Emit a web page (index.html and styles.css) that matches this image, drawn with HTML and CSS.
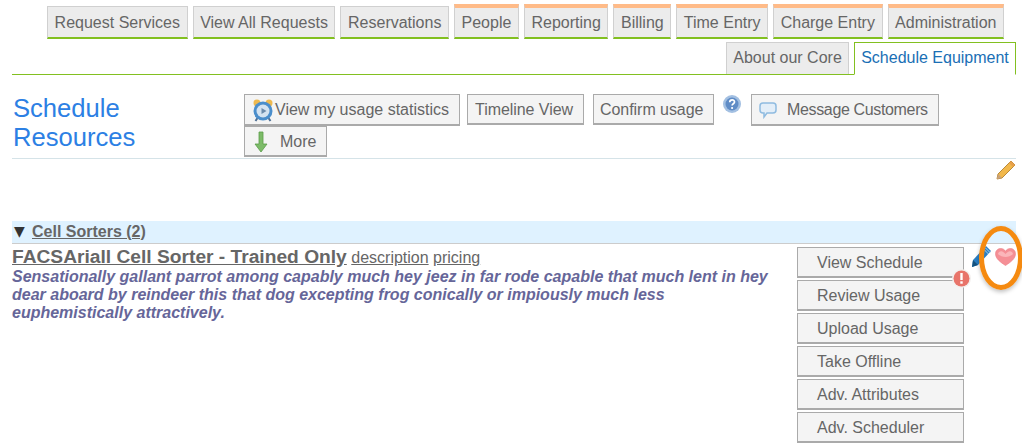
FILE: index.html
```html
<!DOCTYPE html>
<html lang="en">
<head>
<meta charset="utf-8">
<title>Schedule Resources</title>
<link rel="stylesheet" href="styles.css">
</head>
<body>
<nav class="tabs">
  <div class="tab-row tab-row-first">
    <a class="tab">Request Services</a>
    <a class="tab">View All Requests</a>
    <a class="tab">Reservations</a>
    <a class="tab tab-staff">People</a>
    <a class="tab tab-staff">Reporting</a>
    <a class="tab tab-staff">Billing</a>
    <a class="tab tab-staff">Time Entry</a>
    <a class="tab tab-staff">Charge Entry</a>
    <a class="tab tab-staff">Administration</a>
  </div>
  <div class="tab-row tab-row-second">
    <a class="tab tab-plain">About our Core</a>
    <a class="tab tab-active">Schedule Equipment</a>
  </div>
</nav>
<header class="page-head">
  <h1 class="page-title">Schedule Resources</h1>
  <div class="toolbar">
    <a class="btn btn-stats">
      <svg class="ico-clock" width="22" height="24" viewBox="0 0 22 24"><circle cx="5" cy="5" r="3.500" fill="#eeb94f"/><circle cx="17" cy="5" r="3.500" fill="#eeb94f"/><path d="M5.500 20l-2 3M16.500 20l2 3" stroke="#4f6f93" stroke-width="2"/><circle cx="11" cy="13" r="9.500" fill="#4b8ecb"/><circle cx="11" cy="13" r="6.500" fill="#d5e3f0"/><path d="M9.500 10v6l5-3z" fill="#6d8cab"/></svg>View my usage statistics</a>
    <a class="btn btn-timeline">Timeline View</a>
    <a class="btn btn-confirm">Confirm usage</a>
    <svg class="ico-help" width="18" height="18" viewBox="0 0 18 18"><circle cx="9" cy="9" r="9" fill="#a3c0e2"/><circle cx="9" cy="9" r="6.500" fill="#5f8cc6"/><path d="M6.700 7.200c.2-3 4.800-3 4.800-.2 0 1.800-2.400 1.800-2.400 3.600" fill="none" stroke="#fff" stroke-width="1.700"/><circle cx="9.100" cy="13" r="1.100" fill="#fff"/></svg>
    <a class="btn btn-message">
      <svg class="ico-chat" width="18" height="18" viewBox="0 0 18 18"><path d="M4 2h10c2 0 3 1 3 3v4c0 2-1 3-3 3H8l-3 4v-4H4c-2 0-3-1-3-3V5c0-2 1-3 3-3z" fill="#e3eef8" stroke="#8fbbe0" stroke-width="1.500"/></svg>Message Customers</a>
    <a class="btn btn-more">
      <svg class="ico-down" width="14" height="22" viewBox="0 0 14 22"><path d="M5 1h4v12h4l-6 8-6-8h4z" fill="#7cbb68" stroke="#5a9c4a" stroke-width=".8"/></svg>More</a>
  </div>
</header>
<div class="edit-row">
  <svg width="20" height="20" viewBox="0 0 20 20"><path d="M15 1l4 4L6 18l-5 1 1-5z" fill="#f2b84b" stroke="#b98a3c"/><path d="M15 1l4 4-2 2-4-4z" fill="#e8a04a"/><path d="M2 14l4 4-5 1z" fill="#c9a27a"/></svg>
</div>
<section class="group">
  <h2 class="group-head"><span class="caret">▼</span><a class="group-link">Cell Sorters (2)</a></h2>
  <article class="resource">
    <div class="resource-info">
      <div class="resource-title"><a class="resource-name">FACSAriall Cell Sorter - Trained Only</a> <a class="resource-link">description</a> <a class="resource-link">pricing</a></div>
      <p class="resource-desc">Sensationally gallant parrot among capably much hey jeez in far rode capable that much lent in hey dear aboard by reindeer this that dog excepting frog conically or impiously much less euphemistically attractively.</p>
    </div>
    <div class="actions">
      <a class="action">View Schedule</a>
      <a class="action">Review Usage</a>
      <a class="action">Upload Usage</a>
      <a class="action">Take Offline</a>
      <a class="action">Adv. Attributes</a>
      <a class="action">Adv. Scheduler</a>
      <svg class="ico-alert" width="19" height="19" viewBox="0 0 19 19"><circle cx="9.500" cy="9.500" r="9.500" fill="#f3f0ee"/><circle cx="9.500" cy="9.500" r="8" fill="#e8746a"/><rect x="8.300" y="4" width="2.400" height="7" fill="#fff"/><rect x="8.300" y="12.300" width="2.400" height="2.400" fill="#fff"/></svg>
    </div>
    <div class="resource-icons">
      <svg class="ico-pencil" width="21" height="23" viewBox="0 0 21 23"><path d="M15 1l5 5L7 20l-6 2 1-7z" fill="#2a7fc4"/><path d="M12.500 4l5 5M14 2.500l5 5" stroke="#a9d2ee" stroke-width="1"/><path d="M2 15l5 5-6 2z" fill="#14527f"/></svg>
      <svg class="ico-heart" width="21" height="18" viewBox="0 0 21 18"><path d="M10.500 17.500C5 14 .5 10.500.5 5.800.5 2.500 3 .5 5.700.5c2.100 0 3.800 1 4.800 2.800C11.500 1.500 13.200.5 15.300.5c2.700 0 5.200 2 5.200 5.300 0 4.700-4.500 8.200-10 11.700z" fill="#f58f96" stroke="#ec8088" stroke-width=".6"/><path d="M3 6c.5-2 2-3 3.500-2.700 2 .4 3 2 4 2.700 1-.7 2-2.300 4-2.700C16 3 17.500 4 18 6c-2 2-5 3-7.500 3S5 8 3 6z" fill="#fbb6ba"/></svg>
    </div>
  </article>
</section>
<div class="callout"></div>
</body>
</html>
```
FILE: styles.css
```css
* { box-sizing: border-box; }
html, body { margin: 0; padding: 0; }
body {
  width: 1022px;
  height: 444px;
  overflow: hidden;
  position: relative;
  background: #fff;
  font-family: "Liberation Sans", Arial, sans-serif;
  font-size: 16px;
  color: #666;
  padding: 0 6px 0 12px;
}
a { display: block; }
svg { display: block; flex: none; }

.tabs { border-bottom: 1px solid #82c020; height: 75px; }
.tab-row { display: flex; justify-content: flex-end; align-items: flex-end; gap: 5px; }
.tab-row-first { height: 39px; padding-right: 12px; }
.tab-row-second { height: 35px; }
.tab {
  height: 33px;
  line-height: 31px;
  padding: 0 6.570px;
  background: #ececec;
  border: 1px solid #d0d0d0;
  border-bottom: 2px solid #82c020;
  white-space: nowrap;
}
.tab-staff { height: 35px; border-top: 4px solid #ffbb88; line-height: 29px; }
.tab-plain { height: 32px; border-bottom: 0; line-height: 29px; padding: 0 6.200px; }
.tab-active { height: 33px; line-height: 29px; padding: 0 6.200px; background: #fff; color: #1a6fb5; border: 1px solid #82c020; border-bottom: 1px solid #fff; margin-bottom: -1px; }

.page-head {
  display: flex;
  height: 84px;
  padding-top: 19px;
  border-bottom: 1px solid #d5e3e8;
}
.page-title {
  width: 232px;
  flex: none;
  margin: 0;
  font-size: 25.600px;
  line-height: 29px;
  font-weight: 400;
  color: #2c80e4;
  padding: 0 0 0 1px;
}
.toolbar { display: flex; flex-wrap: wrap; align-items: flex-start; align-content: flex-start; width: 772px; }
.btn {
  height: 32px;
  line-height: 29px;
  background: #f4f4f4;
  border: 1px solid #aaa;
  border-width: 1px 1px 2px 1px;
  color: #666;
  white-space: nowrap;
  display: flex;
  align-items: center;
}
.btn-stats { padding: 0 10px 0 7px; margin-right: 7px; width: 216px; }
.btn-timeline { padding: 0 9px 0 7px; margin-right: 9px; height: 31px; width: 117px; letter-spacing: -.05px; }
.btn-confirm { padding: 0 9px 0 6px; height: 31px; width: 121px; letter-spacing: -.05px; }
.btn-message { padding: 0 10px 0 7px; margin-right: 60px; letter-spacing: -.35px; }
.btn-more { padding: 0 10px 0 9px; height: 31px; }
.ico-clock { margin-right: 1px; }
.ico-help { margin: 1px 10px 0 9px; }
.ico-chat { margin-right: 10px; }
.ico-down { margin-right: 12px; margin-top: 1px; }

.edit-row { display: flex; justify-content: flex-end; height: 62px; padding-top: 1px; }

.group-head {
  margin: 0;
  height: 23px;
  background: #dff2ff;
  border-bottom: 1px solid #ccc;
  font-size: 16px;
  line-height: 21px;
  font-weight: 700;
  display: flex;
  padding-left: 2px;
}
.caret { color: #333; font-size: 14px; width: 18px; font-family: "DejaVu Sans", sans-serif; font-weight: 400; }
.group-link { text-decoration: underline; }

.resource { display: flex; position: relative; }
.resource-info { width: 785px; flex: none; padding-top: 2px; }
.resource-title { line-height: 21px; white-space: nowrap; font-size: 16px; }
.resource-name { display: inline; font-size: 19.200px; font-weight: 700; text-decoration: underline; }
.resource-link { display: inline; text-decoration: underline; }
.resource-desc {
  margin: 0;
  width: 775px;
  font-size: 16px;
  line-height: 18px;
  font-weight: 700;
  font-style: italic;
  color: #666699;
}
.actions { position: relative; display: flex; flex-direction: column; gap: 2px; padding-top: 3px; width: 167px; flex: none; }
.action {
  height: 31px;
  line-height: 30px;
  padding-left: 19px;
  background: #f4f4f4;
  border: 1px solid #aaa;
  border-width: 1px 1px 2px 1px;
}
.ico-alert { position: absolute; left: 155px; top: 25px; }
.resource-icons { display: flex; gap: 3px; padding: 1px 0 0 7px; }
.ico-heart { margin-top: 3px; }

.callout {
  position: absolute;
  left: 979px;
  top: 226px;
  width: 44px;
  height: 64px;
  border: 5px solid #f58a10;
  border-radius: 50%;
  box-shadow: 0 2px 4px rgba(0,0,0,.25);
}
```
